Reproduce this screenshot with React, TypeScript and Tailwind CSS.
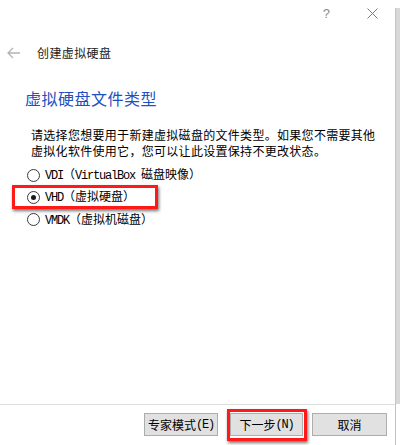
import React from "react";

const CJK = { fontFamily: '"Noto Sans CJK SC", "Noto Sans", sans-serif' };

function M({ children }: { children: React.ReactNode }) {
  return (
    <span className="font-['Liberation_Mono',monospace] text-[12px] tracking-[-1.2px]">
      {children}
    </span>
  );
}

function Radio({ checked }: { checked?: boolean }) {
  return (
    <span className="w-[13px] h-[13px] rounded-full border border-[#3a3a3a] bg-white flex items-center justify-center shrink-0">
      {checked && <span className="w-[5px] h-[5px] rounded-full bg-[#1a1a1a]" />}
    </span>
  );
}

function Btn({ children, w }: { children: React.ReactNode; w: string }) {
  return (
    <div
      className={`${w} h-[23px] bg-[#e1e1e1] border border-[#adadad] flex items-center justify-center text-[12px] text-black leading-none`}
    >
      {children}
    </div>
  );
}

export default function App() {
  return (
    <div
      className="w-[400px] h-[445px] bg-white flex overflow-hidden text-black"
      style={CJK}
    >
      <div className="w-[395px] flex flex-col">
        {/* title bar */}
        <div className="h-[26px] flex items-center justify-end">
          <span className="text-[13px] text-[#8a8a8a] mr-[37px] leading-none font-['Liberation_Sans',sans-serif]">
            ?
          </span>
          <svg width="11" height="11" viewBox="0 0 11 11" className="mr-[17px]">
            <path d="M0.5 0.5 L10.5 10.5 M10.5 0.5 L0.5 10.5" stroke="#7a7a7a" strokeWidth="1" />
          </svg>
        </div>

        {/* back + title */}
        <div className="mt-[16px] h-[22px] flex items-center">
          <svg width="14" height="12" viewBox="0 0 14 12" className="ml-[7px]">
            <path d="M1 6 H13 M6 1 L1 6 L6 11" stroke="#b4b4b4" strokeWidth="1.3" fill="none" />
          </svg>
          <span className="ml-[16px] text-[12px] tracking-[0.4px] text-[#1a1a1a] leading-none">
            创建虚拟硬盘
          </span>
        </div>

        {/* heading */}
        <div className="mt-[24px] ml-[25px] h-[20px] flex items-center text-[16px] tracking-[0.5px] text-[#2151c1] leading-none">
          虚拟硬盘文件类型
        </div>

        {/* description */}
        <div className="mt-[19px] ml-[31px] text-[12px] leading-[16px] tracking-[0.3px]">
          <div>请选择您想要用于新建虚拟磁盘的文件类型。如果您不需要其他</div>
          <div>虚拟化软件使用它，您可以让此设置保持不更改状态。</div>
        </div>

        {/* radios */}
        <div className="mt-[5px] flex flex-col text-[12px]">
          <div className="h-[22px] flex items-center pl-[27px] gap-[5px]">
            <Radio />
            <span className="leading-none">
              <M>VDI</M>（<M>VirtualBox </M>磁盘映像）
            </span>
          </div>
          <div className="h-[22px] flex items-center pl-[27px] gap-[5px] relative">
            <Radio checked />
            <span className="leading-none">
              <M>VHD</M>（虚拟硬盘）
            </span>
            <div className="absolute left-[12px] top-[-1px] w-[146px] h-[24px] border-[3px] border-[#ff1a1a] shadow-[1px_2px_3px_rgba(0,0,0,0.55)]" />
          </div>
          <div className="h-[23px] flex items-center pl-[27px] gap-[5px]">
            <Radio />
            <span className="leading-none">
              <M>VMDK</M>（虚拟机磁盘）
            </span>
          </div>
        </div>

        <div className="flex-1" />

        {/* footer */}
        <div className="h-[41px] border-t border-[#dfdfdf] flex items-start pt-[8px]">
          <div className="ml-[144px]">
            <Btn w="w-[74px]">
              专家模式<M>(E)</M>
            </Btn>
          </div>
          <div className="ml-[12px] relative">
            <Btn w="w-[73px]">
              下一步<M>(N)</M>
            </Btn>
            <div className="absolute left-[-3px] top-[-4px] w-[80px] h-[32px] border-[3px] border-[#ff1a1a] shadow-[1px_2px_3px_rgba(0,0,0,0.55)]" />
          </div>
          <div className="ml-[9px]">
            <Btn w="w-[75px]">取消</Btn>
          </div>
        </div>
      </div>

      {/* right edge strip */}
      <div className="w-[5px] flex flex-col">
        <div className="h-[8px]" />
        <div className="flex-1 bg-[#d8d8d8] border-l border-[#c4c4c4]" />
        <div className="h-[41px] border-l border-[#c4c4c4] bg-white" />
      </div>
    </div>
  );
}
